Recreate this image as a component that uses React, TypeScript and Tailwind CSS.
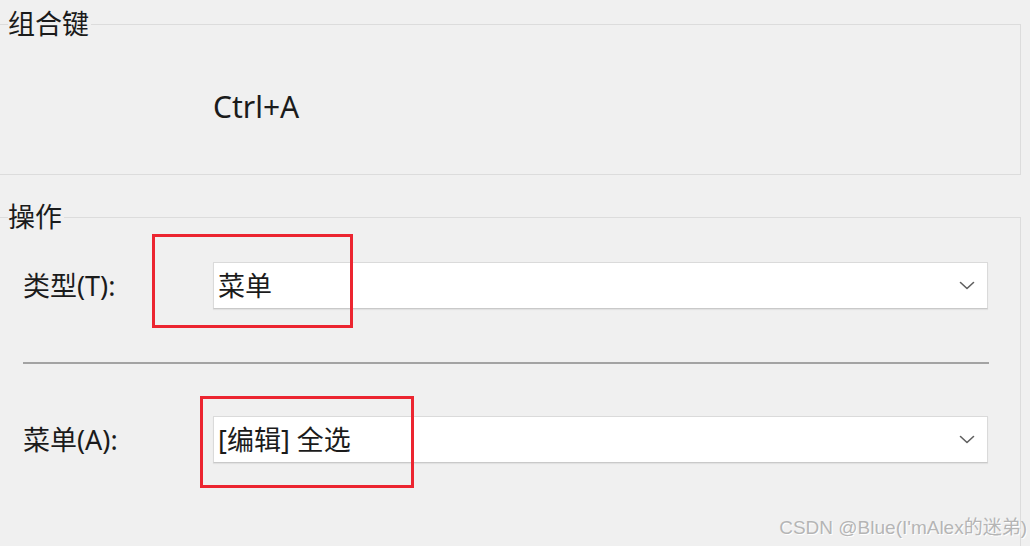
const Chevron = () => (
  <svg width="16" height="9" viewBox="0 0 16 9" fill="none">
    <polyline points="1.5,1.5 8,7.5 14.5,1.5" stroke="#5f5f5f" strokeWidth="1.6" strokeLinecap="round" strokeLinejoin="round" />
  </svg>
);

const Combo = ({ value }: { value: string }) => (
  <div className="w-[775px] h-[47px] bg-white border border-[#dadada] border-b-[#c9c9c9] shadow-[0_1px_1px_rgba(0,0,0,0.06)] flex items-center justify-between pl-[4px] pr-[12px]">
    <span className="text-[27px] leading-none text-[#1b1b1b]">{value}</span>
    <Chevron />
  </div>
);

const Row = ({ label, value }: { label: string; value: string }) => (
  <div className="flex items-center pl-[15px]">
    <span className="w-[190px] text-[27px] leading-none text-[#1b1b1b]">{label}</span>
    <Combo value={value} />
  </div>
);

export default function App() {
  return (
    <div className="relative w-[1030px] h-[546px] overflow-hidden bg-[#f0f0f0] font-['Noto_Sans','Noto_Sans_CJK_SC',sans-serif]">
      {/* 组合键 */}
      <fieldset className="-ml-[3px] w-[1024px] h-[164px] mt-[11px] border border-[#dcdcdc] px-[10px]">
        <legend className="text-[27px] leading-[26px] text-[#1b1b1b] pr-[2px]">组合键</legend>
        <div className="pl-[205px] mt-[51px] text-[30px] leading-[38px] text-[#1b1b1b]">Ctrl+A</div>
      </fieldset>

      {/* 操作 */}
      <fieldset className="-ml-[3px] w-[1024px] h-[400px] mt-[29px] border border-[#dcdcdc] px-[10px]">
        <legend className="text-[27px] leading-[26px] text-[#1b1b1b] pr-[2px]">操作</legend>
        <div className="mt-[32px]">
          <Row label="类型(T):" value="菜单" />
        </div>
        <div className="ml-[15px] mt-[53px] w-[966px] h-[2px] bg-[#a3a3a3]" />
        <div className="mt-[52px]">
          <Row label="菜单(A):" value="[编辑] 全选" />
        </div>
      </fieldset>

      {/* 标注框 */}
      <div className="absolute left-[152px] top-[234px] w-[201px] h-[94px] border-[3px] border-[#ec2530]" />
      <div className="absolute left-[200px] top-[396px] w-[214px] h-[92px] border-[3px] border-[#ec2530]" />

      <div className="absolute right-[3px] bottom-[9px] text-[19px] leading-none text-[#b5b5b5] font-['Liberation_Sans','Noto_Sans_CJK_SC',sans-serif] [text-shadow:1px_1px_0_#ffffff]">
        CSDN @Blue(I&apos;mAlex的迷弟)
      </div>
    </div>
  );
}
